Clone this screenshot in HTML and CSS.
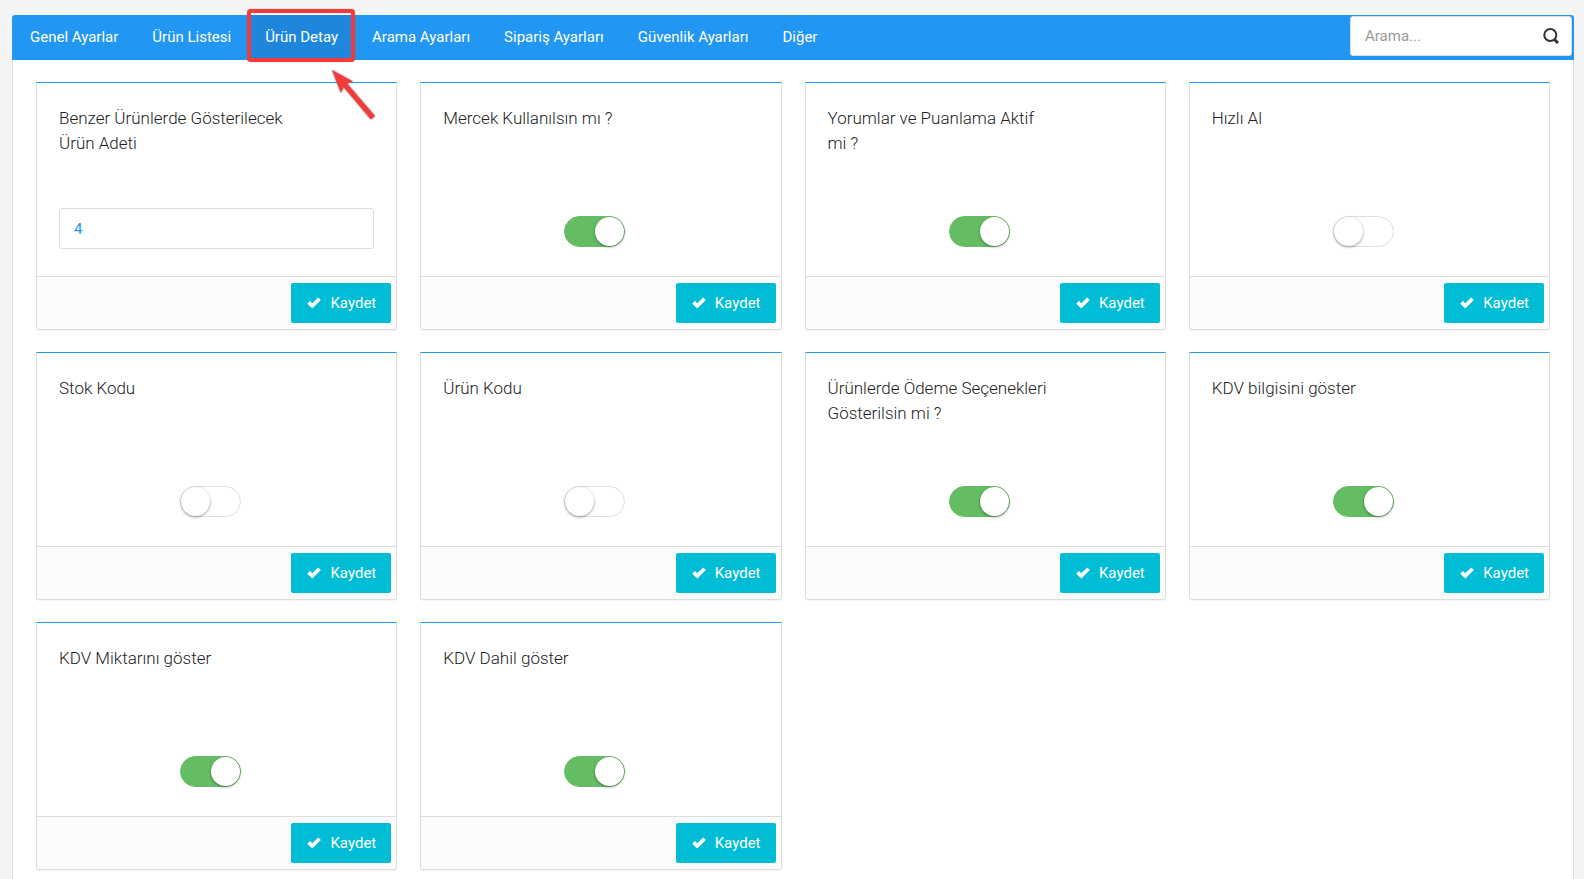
FILE: index.html
```html
<!DOCTYPE html>
<html lang="tr">
<head>
<meta charset="utf-8">
<title>Ürün Detay</title>
<link rel="stylesheet" href="styles.css">
</head>
<body>
<svg class="symbols" aria-hidden="true">
  <symbol id="check" viewBox="0 0 14 12"><path d="M0.200 6.800 2.900 4.100 5.300 6.300 11.200 0.400 13.900 3 5.300 11.600Z"/></symbol>
</svg>
<main class="panel">
  <header class="bar">
    <nav class="tabs">
      <a class="tab" href="#">Genel Ayarlar</a>
      <a class="tab" href="#">Ürün Listesi</a>
      <a class="tab tab-active" href="#" aria-current="page">Ürün Detay
        <span class="marker"></span>
        <svg class="arrow" viewBox="0 0 46 52" aria-hidden="true"><path d="M1 1 22 12.500 16 14.500 44 47 40 50.500 12.500 18 10 24Z"/></svg>
      </a>
      <a class="tab" href="#">Arama Ayarları</a>
      <a class="tab" href="#">Sipariş Ayarları</a>
      <a class="tab" href="#">Güvenlik Ayarları</a>
      <a class="tab" href="#">Diğer</a>
    </nav>
    <form class="search">
      <input class="search-input" type="text" placeholder="Arama..." aria-label="Arama">
      <button class="search-button" type="button" aria-label="Ara"><svg class="search-icon" viewBox="0 0 16 16"><circle cx="7.300" cy="7" r="6"/><path class="search-handle" d="M11.500 11.500 15 15"/></svg></button>
    </form>
  </header>
  <div class="grid">
    <section class="card">
      <div class="card-body">
        <label class="title" for="s1">Benzer Ürünlerde Gösterilecek Ürün Adeti</label>
        <input class="field" id="s1" type="text" value="4">
      </div>
      <footer class="card-footer"><button class="save" type="button"><svg class="check"><use href="#check"/></svg>Kaydet</button></footer>
    </section>
    <section class="card">
      <div class="card-body">
        <label class="title" for="s2">Mercek Kullanılsın mı ?</label>
        <input class="switch" id="s2" type="checkbox" checked>
      </div>
      <footer class="card-footer"><button class="save" type="button"><svg class="check"><use href="#check"/></svg>Kaydet</button></footer>
    </section>
    <section class="card">
      <div class="card-body">
        <label class="title" for="s3">Yorumlar ve Puanlama Aktif mi ?</label>
        <input class="switch" id="s3" type="checkbox" checked>
      </div>
      <footer class="card-footer"><button class="save" type="button"><svg class="check"><use href="#check"/></svg>Kaydet</button></footer>
    </section>
    <section class="card">
      <div class="card-body">
        <label class="title" for="s4">Hızlı Al</label>
        <input class="switch" id="s4" type="checkbox">
      </div>
      <footer class="card-footer"><button class="save" type="button"><svg class="check"><use href="#check"/></svg>Kaydet</button></footer>
    </section>
    <section class="card">
      <div class="card-body">
        <label class="title" for="s5">Stok Kodu</label>
        <input class="switch" id="s5" type="checkbox">
      </div>
      <footer class="card-footer"><button class="save" type="button"><svg class="check"><use href="#check"/></svg>Kaydet</button></footer>
    </section>
    <section class="card">
      <div class="card-body">
        <label class="title" for="s6">Ürün Kodu</label>
        <input class="switch" id="s6" type="checkbox">
      </div>
      <footer class="card-footer"><button class="save" type="button"><svg class="check"><use href="#check"/></svg>Kaydet</button></footer>
    </section>
    <section class="card">
      <div class="card-body">
        <label class="title" for="s7">Ürünlerde Ödeme Seçenekleri Gösterilsin mi ?</label>
        <input class="switch" id="s7" type="checkbox" checked>
      </div>
      <footer class="card-footer"><button class="save" type="button"><svg class="check"><use href="#check"/></svg>Kaydet</button></footer>
    </section>
    <section class="card">
      <div class="card-body">
        <label class="title" for="s8">KDV bilgisini göster</label>
        <input class="switch" id="s8" type="checkbox" checked>
      </div>
      <footer class="card-footer"><button class="save" type="button"><svg class="check"><use href="#check"/></svg>Kaydet</button></footer>
    </section>
    <section class="card">
      <div class="card-body">
        <label class="title" for="s9">KDV Miktarını göster</label>
        <input class="switch" id="s9" type="checkbox" checked>
      </div>
      <footer class="card-footer"><button class="save" type="button"><svg class="check"><use href="#check"/></svg>Kaydet</button></footer>
    </section>
    <section class="card">
      <div class="card-body">
        <label class="title" for="s10">KDV Dahil göster</label>
        <input class="switch" id="s10" type="checkbox" checked>
      </div>
      <footer class="card-footer"><button class="save" type="button"><svg class="check"><use href="#check"/></svg>Kaydet</button></footer>
    </section>
  </div>
</main>
</body>
</html>
```

FILE: styles.css
```css
* { box-sizing: border-box; }
html { height: 100%; }
body {
  margin: 0;
  height: 100%;
  padding: 15px 10px 0 12px;
  background: #f4f4f4;
  color: #333;
  font: 15px/25px Roboto, sans-serif;
}
input, button { font: inherit; }
.symbols { position: absolute; width: 0; height: 0; }
.panel {
  display: flex;
  flex-direction: column;
  min-height: 100%;
  background: #fff;
  border-radius: 3px 3px 0 0;
  box-shadow: inset 1px 0 #ddd, inset -1px 0 #ddd;
}
.bar {
  display: flex;
  justify-content: space-between;
  align-items: flex-start;
  background: #2196f3;
  border-radius: 3px 3px 0 0;
}
.tabs { display: flex; padding-left: 1px; }
.tab {
  position: relative;
  padding: 10px 17px;
  color: #fff;
  text-decoration: none;
  white-space: nowrap;
}
.tab-active { background: #1e87db; }
.marker {
  position: absolute;
  inset: -6px 0 -2px -1px;
  border: 4px solid #f43b3b;
  border-radius: 4px;
  box-shadow: 0 0 1px #555;
}
.arrow {
  position: absolute;
  top: 54px;
  left: 83px;
  width: 46px;
  height: 52px;
  fill: #f43b3b;
  filter: drop-shadow(0 0 1px #777);
  z-index: 1;
}
.search {
  display: flex;
  align-items: center;
  width: 222px;
  height: 40px;
  margin: 1px 2px 0 0;
  padding: 0 12px 0 14px;
  background: #fff;
  border: 1px solid #ddd;
  border-radius: 3px;
}
.search-input {
  flex: 1;
  min-width: 0;
  padding: 0;
  border: 0;
  outline: 0;
  background: none;
}
.search-input::placeholder { color: #999; }
.search-button { display: flex; padding: 0; border: 0; background: none; }
.search-icon { width: 16px; height: 16px; fill: none; stroke: #333; stroke-width: 2; }
.search-handle { stroke-width: 3; }
.grid {
  display: grid;
  grid-template-columns: repeat(4, minmax(0, 1fr));
  gap: 22px 23px;
  padding: 22px 24px 9px;
}
.card {
  border: 1px solid #ddd;
  border-top-color: #2196f3;
  border-radius: 0 0 3px 3px;
  box-shadow: 0 1px 1px rgba(0, 0, 0, .05);
}
.card-body {
  display: flex;
  flex-direction: column;
  justify-content: space-between;
  min-height: 193px;
  padding: 23px 22px 27px;
}
.title { width: 72%; color: #222; font-size: 17px; font-weight: 300; }
.field {
  width: 100%;
  height: 41px;
  padding: 0 14px;
  border: 1px solid #ddd;
  border-radius: 3px;
  background: #fff;
  color: #2196f3;
  outline: 0;
}
.switch {
  appearance: none;
  display: flex;
  align-self: center;
  width: 61px;
  height: 31px;
  margin: 0 12px 2px 0;
  border: 1px solid #dfdfdf;
  border-radius: 16px;
  background: #fff;
}
.switch::before {
  content: "";
  width: 29px;
  height: 29px;
  border-radius: 50%;
  background: #fff;
  box-shadow: 0 1px 3px rgba(0, 0, 0, .4);
}
.switch:checked { justify-content: flex-end; background: #64bd63; border-color: #64bd63; }
.card-footer {
  display: flex;
  justify-content: flex-end;
  padding: 6px 5px;
  border-top: 1px solid #ddd;
  border-radius: 0 0 3px 3px;
  background: #fcfcfc;
}
.save {
  display: flex;
  align-items: center;
  gap: 9px;
  height: 40px;
  padding: 0 15px 0 16px;
  border: 0;
  border-radius: 2px;
  background: #00bcd4;
  color: #fff;
}
.check { width: 14px; height: 12px; fill: #fff; }
```
